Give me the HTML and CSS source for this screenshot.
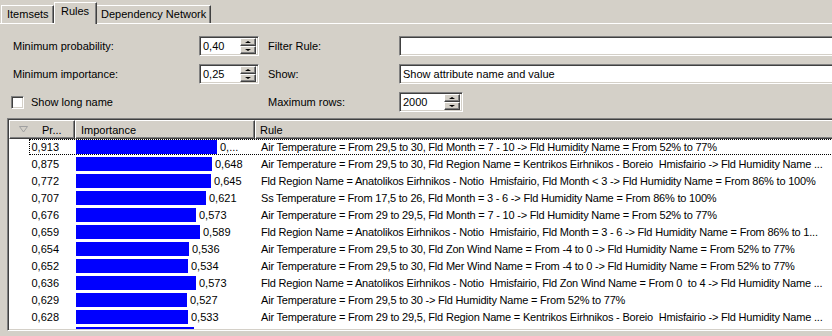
FILE: index.html
```
<!DOCTYPE html>
<html>
<head>
<meta charset="utf-8">
<link rel="stylesheet" href="styles.css">
</head>
<body>
<div class="app">
  <div class="tabs">
    <div class="tab t-items">Itemsets</div>
    <div class="tab active t-rules">Rules</div>
    <div class="tab t-dep">Dependency Network</div>
  </div>
  <div class="controls">
    <div class="lbl">Minimum probability:</div>
    <div class="spin"><span class="val">0,40</span><span class="btns"><span class="sb"><span class="arr up"></span></span><span class="sb"><span class="arr down"></span></span></span></div>
    <div class="lbl lbl2">Filter Rule:</div>
    <div class="field"></div>

    <div class="lbl">Minimum importance:</div>
    <div class="spin"><span class="val">0,25</span><span class="btns"><span class="sb"><span class="arr up"></span></span><span class="sb"><span class="arr down"></span></span></span></div>
    <div class="lbl lbl2">Show:</div>
    <div class="field"><span class="val">Show attribute name and value</span></div>

    <div class="check-wrap"><span class="check"></span><span class="check-lbl">Show long name</span></div>
    <div class="lbl lbl2">Maximum rows:</div>
    <div class="spin spin-rows"><span class="val">2000</span><span class="btns"><span class="sb"><span class="arr up"></span></span><span class="sb"><span class="arr down"></span></span></span></div>
  </div>
  <div class="grid">
    <div class="hdr">
      <div class="hc hc-pr"><svg class="sort" width="9" height="7" viewBox="0 0 9 7"><polygon points="0.5,0.5 8.5,0.5 4.5,6" fill="none" stroke="#a0a0a0" stroke-width="1"/></svg><span class="htxt">Pr...</span></div>
      <div class="hc hc-imp">Importance</div>
      <div class="hc hc-rule">Rule</div>
    </div>
    <div class="rows">
      <div class="row focus"><div class="c-pr">0,913</div><div class="c-imp"><span class="bar" style="width:141px"></span><span class="iv">0,...</span></div><div class="c-rule">Air Temperature = From 29,5 to 30, Fld Month = 7 - 10 -&gt; Fld Humidity Name = From 52% to 77%</div></div>
      <div class="row"><div class="c-pr">0,875</div><div class="c-imp"><span class="bar" style="width:136px"></span><span class="iv">0,648</span></div><div class="c-rule">Air Temperature = From 29,5 to 30, Fld Region Name = Kentrikos Eirhnikos - Boreio  Hmisfairio -&gt; Fld Humidity Name ...</div></div>
      <div class="row"><div class="c-pr">0,772</div><div class="c-imp"><span class="bar" style="width:135px"></span><span class="iv">0,645</span></div><div class="c-rule">Fld Region Name = Anatolikos Eirhnikos - Notio  Hmisfairio, Fld Month &lt; 3 -&gt; Fld Humidity Name = From 86% to 100%</div></div>
      <div class="row"><div class="c-pr">0,707</div><div class="c-imp"><span class="bar" style="width:130px"></span><span class="iv">0,621</span></div><div class="c-rule">Ss Temperature = From 17,5 to 26, Fld Month = 3 - 6 -&gt; Fld Humidity Name = From 86% to 100%</div></div>
      <div class="row"><div class="c-pr">0,676</div><div class="c-imp"><span class="bar" style="width:120px"></span><span class="iv">0,573</span></div><div class="c-rule">Air Temperature = From 29 to 29,5, Fld Month = 7 - 10 -&gt; Fld Humidity Name = From 52% to 77%</div></div>
      <div class="row"><div class="c-pr">0,659</div><div class="c-imp"><span class="bar" style="width:124px"></span><span class="iv">0,589</span></div><div class="c-rule">Fld Region Name = Anatolikos Eirhnikos - Notio  Hmisfairio, Fld Month = 3 - 6 -&gt; Fld Humidity Name = From 86% to 1...</div></div>
      <div class="row"><div class="c-pr">0,654</div><div class="c-imp"><span class="bar" style="width:113px"></span><span class="iv">0,536</span></div><div class="c-rule">Air Temperature = From 29,5 to 30, Fld Zon Wind Name = From -4 to 0 -&gt; Fld Humidity Name = From 52% to 77%</div></div>
      <div class="row"><div class="c-pr">0,652</div><div class="c-imp"><span class="bar" style="width:112px"></span><span class="iv">0,534</span></div><div class="c-rule">Air Temperature = From 29,5 to 30, Fld Mer Wind Name = From -4 to 0 -&gt; Fld Humidity Name = From 52% to 77%</div></div>
      <div class="row"><div class="c-pr">0,636</div><div class="c-imp"><span class="bar" style="width:120px"></span><span class="iv">0,573</span></div><div class="c-rule">Fld Region Name = Anatolikos Eirhnikos - Notio  Hmisfairio, Fld Zon Wind Name = From 0  to 4 -&gt; Fld Humidity Name ...</div></div>
      <div class="row"><div class="c-pr">0,629</div><div class="c-imp"><span class="bar" style="width:111px"></span><span class="iv">0,527</span></div><div class="c-rule">Air Temperature = From 29,5 to 30 -&gt; Fld Humidity Name = From 52% to 77%</div></div>
      <div class="row"><div class="c-pr">0,628</div><div class="c-imp"><span class="bar" style="width:112px"></span><span class="iv">0,533</span></div><div class="c-rule">Air Temperature = From 29 to 29,5, Fld Region Name = Kentrikos Eirhnikos - Boreio  Hmisfairio -&gt; Fld Humidity Name ...</div></div>
      <div class="row"><div class="c-pr"></div><div class="c-imp"><span class="bar" style="width:118px"></span></div><div class="c-rule"></div></div>
    </div>
  </div>
</div>
</body>
</html>
```

FILE: styles.css
```
* { box-sizing: border-box; }
html, body {
  margin: 0;
  padding: 0;
  background: #d4d0c8;
  overflow: hidden;
}
body {
  font-family: "Liberation Sans", Arial, sans-serif;
  font-size: 11px;
  color: #000;
  width: 832px;
  height: 336px;
}
.app {
  width: 900px;
  height: 336px;
  overflow: hidden;
}

/* tabs */
.tabs {
  display: flex;
  align-items: flex-end;
  height: 24px;
  padding-left: 1px;
  border-bottom: 1px solid #fff;
}
.tab {
  height: 18px;
  border-top: 1px solid #fff;
  border-left: 1px solid #fff;
  border-right: 1px solid #404040;
  box-shadow: inset -1px 0 #808080;
  padding-left: 5px;
  line-height: 16px;
  white-space: nowrap;
}
.t-items { width: 53px; }
.t-rules { width: 43px; padding-left: 6px; }
.t-dep { width: 114px; padding-left: 4px; border-left: none; }
.tab.active {
  height: 22px;
  margin-bottom: -1px;
  background: #d4d0c8;
  line-height: 17px;
  position: relative;
}

/* controls */
.controls {
  display: grid;
  grid-template-columns: 186px 60px 140px 1fr;
  grid-template-rows: 20px 20px 20px;
  row-gap: 8px;
  padding: 12px 0 0 13px;
  align-items: center;
}
.lbl { line-height: 20px; white-space: nowrap; }
.lbl2 { padding-left: 9px; }
.lbl2.lbl { grid-column: 3; }
.controls > .check-wrap { grid-column: 1 / span 2; }

.field, .spin {
  height: 20px;
  background: #fff;
  border: 1px solid;
  border-color: #808080 #fff #fff #808080;
  box-shadow: inset 1px 1px #404040, inset -1px -1px #d4d0c8;
  display: flex;
  align-items: center;
  padding: 2px 2px 2px 3px;
}
.field .val, .spin .val { flex: 1; line-height: 14px; }
.spin { width: 60px; }
.spin-rows { width: 64px; }
.btns {
  display: flex;
  flex-direction: column;
  width: 16px;
  height: 16px;
}
.sb {
  flex: 1;
  background: #d4d0c8;
  border: 1px solid;
  border-color: #fff #404040 #404040 #fff;
  box-shadow: inset -1px -1px #808080;
  display: flex;
  align-items: center;
  justify-content: center;
}
.arr {
  width: 0;
  height: 0;
  border-left: 3px solid transparent;
  border-right: 3px solid transparent;
}
.arr.up { border-bottom: 2px solid #000; margin-bottom: 1px; }
.arr.down { border-top: 2px solid #000; }

.check-wrap {
  display: flex;
  align-items: center;
  margin-left: -2px;
}
.check {
  width: 13px;
  height: 13px;
  background: #fff;
  border: 1px solid;
  border-color: #808080 #fff #fff #808080;
  box-shadow: inset 1px 1px #404040, inset -1px -1px #d4d0c8;
  margin-right: 7px;
}

/* grid */
.grid {
  margin: 6px 0 0 7px;
  height: 213px;
  border: 1px solid;
  border-color: #808080 #fff #fff #808080;
  box-shadow: inset 1px 1px #404040, inset -1px -1px #d4d0c8;
  padding: 1px 0 1px 1px;
  overflow: hidden;
  display: flex;
  flex-direction: column;
}
.hdr {
  display: flex;
  height: 19px;
  flex: none;
}
.hc {
  height: 19px;
  border: 1px solid;
  border-color: #fff #404040 #404040 #fff;
  box-shadow: inset -1px -1px #808080;
  background: #d4d0c8;
  display: flex;
  align-items: center;
  white-space: nowrap;
}
.hc-pr { width: 66px; padding-left: 9px; }
.hc-pr .sort { display: block; }
.hc-pr .htxt { margin-left: 14px; }
.hc-imp { width: 180px; padding-left: 5px; }
.hc-rule { flex: 1; padding-left: 4px; }

.rows {
  flex: 1;
  background: #fff;
  overflow: hidden;
}
.row {
  display: flex;
  height: 17px;
  line-height: 17px;
  position: relative;
}
.row.focus::after {
  content: "";
  position: absolute;
  left: 20px;
  right: 0;
  top: 0;
  bottom: 1px;
  border: 1px dotted #000;
  pointer-events: none;
}
.c-pr {
  width: 66px;
  text-align: right;
  padding-right: 16px;
}
.c-imp {
  width: 180px;
  padding-left: 1px;
  display: flex;
  align-items: flex-start;
  overflow: hidden;
  white-space: nowrap;
}
.bar {
  display: block;
  height: 14px;
  margin-top: 1px;
  background: #0000ff;
  flex: none;
  position: relative;
  z-index: 1;
}
.iv { margin-left: 3px; }
.c-rule {
  flex: 1;
  padding-left: 6px;
  white-space: pre;
  overflow: hidden;
  letter-spacing: -0.2px;
}
```
